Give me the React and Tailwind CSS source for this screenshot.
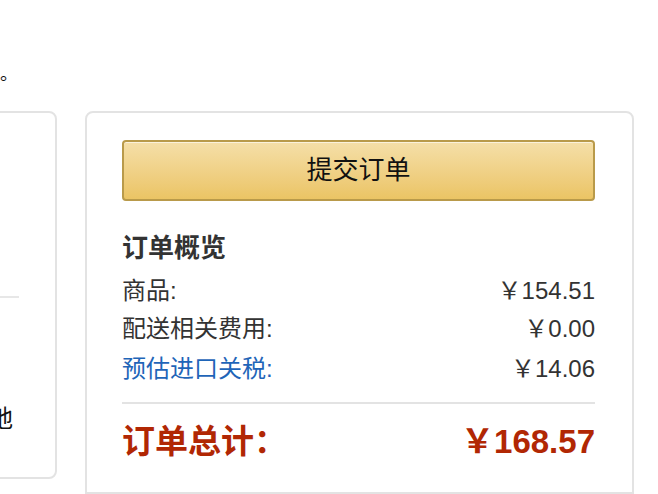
export default function App() {
  const cjk = { fontFamily: '"Liberation Sans", "Noto Sans CJK SC", sans-serif' };
  return (
    <div className="w-[658px] h-[494px] overflow-hidden bg-white relative text-[#111]" style={cjk}>
      <div className="h-[111px] pt-[60px]">
        <div className="w-[18px] flex justify-end whitespace-nowrap text-[18px] leading-[28px] text-[#111]">
          请仔细核对您的订单信息后再提交。
        </div>
      </div>
      <div className="flex gap-[28px] items-start">
        <div className="-ml-[300px] w-[357px] h-[368px] shrink-0 border-2 border-[#e3e3e3] rounded-[8px] pr-[36px] pl-[20px] flex flex-col">
          <div className="h-[183px]"></div>
          <div className="h-[2px] bg-[#e7e7e7]"></div>
          <div className="flex-1 flex flex-col justify-start">
            <div className="mt-[106px] flex justify-end whitespace-nowrap text-[24px] leading-[30px] text-[#111] pr-[6px]">
              收货地址仅支持中国大陆地
            </div>
          </div>
        </div>
        <div className="w-[549px] h-[383px] shrink-0 border-2 border-[#e3e3e3] rounded-t-[8px] pl-[35px] pr-[37px] pt-[27px]">
          <button className="w-full h-[61px] rounded-[4px] border-2 border-[#b99a4a] bg-gradient-to-b from-[#f5dfa8] to-[#ebc464] shadow-[inset_0_1px_0_rgba(255,255,255,0.6)] text-[26px] text-[#111] flex items-center justify-center">
            提交订单
          </button>
          <div className="mt-[32px] text-[26px] leading-[30px] font-bold text-[#333]">订单概览</div>
          <div className="mt-[13px] flex justify-between text-[24px] leading-[30px] text-[#333]">
            <span>商品:</span>
            <span>￥154.51</span>
          </div>
          <div className="mt-[8px] flex justify-between text-[24px] leading-[30px] text-[#333]">
            <span>配送相关费用:</span>
            <span>￥0.00</span>
          </div>
          <div className="mt-[10px] flex justify-between text-[24px] leading-[30px] text-[#333]">
            <span className="text-[#1f65b8]">预估进口关税:</span>
            <span>￥14.06</span>
          </div>
          <div className="mt-[18px] h-[2px] bg-[#e3e3e3]"></div>
          <div className="mt-[20px] flex justify-between items-center text-[33px] leading-[36px] font-bold text-[#b12704]">
            <span>订单总计：</span>
            <span>￥168.57</span>
          </div>
        </div>
      </div>
    </div>
  );
}
